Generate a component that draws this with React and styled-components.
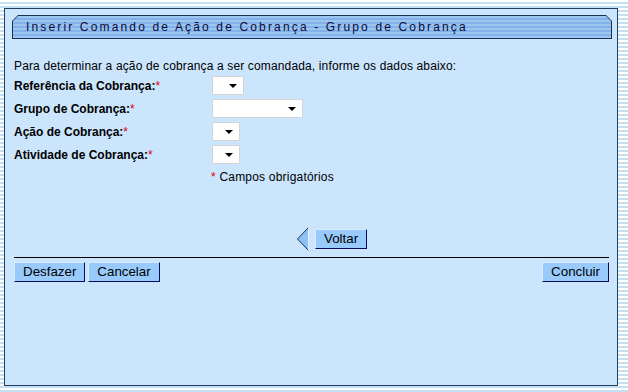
import React from "react";
import styled, { createGlobalStyle } from "styled-components";

const Global = createGlobalStyle`
  html, body { margin: 0; padding: 0; }
  body {
    width: 628px;
    height: 392px;
    overflow: hidden;
    font-family: "Liberation Sans", Arial, sans-serif;
    background: repeating-linear-gradient(to bottom, #ffffff 0 2px, #c4e0f5 2px 4px);
  }
  #root { padding: 8px 10px 0 4px; }
`;

const Panel = styled.div`
  box-sizing: border-box;
  width: 614px;
  height: 378px;
  background: #cbe5fd;
  border: 1px solid #24415f;
  padding: 6px 5px 0 7px;
  display: flex;
  flex-direction: column;
`;

const TitleFrame = styled.div`
  height: 24px;
  background: #1c3150;
  padding: 1px;
  box-sizing: border-box;
  clip-path: polygon(6px 0, calc(100% - 6px) 0, 100% 6px, 100% 100%, 0 100%, 0 6px);
`;

const TitleBar = styled.div`
  height: 100%;
  display: flex;
  align-items: center;
  padding-left: 13px;
  background: repeating-linear-gradient(to bottom, #9cc5f0 0 2px, #82b2e9 2px 4px);
  clip-path: polygon(5px 0, calc(100% - 5px) 0, 100% 5px, 100% 100%, 0 100%, 0 5px);
  color: #0a0a3a;
  font-size: 12px;
  letter-spacing: 2.15px;
`;

const Content = styled.div`
  padding: 0 3px 0 2px;
  display: flex;
  flex-direction: column;
  font-size: 12px;
  color: #000;
`;

const Intro = styled.div`
  margin-top: 20px;
  line-height: 15px;
  letter-spacing: 0.14px;
`;

const Form = styled.div`
  margin-top: 2px;
  display: grid;
  grid-template-columns: 198px auto;
  grid-auto-rows: 23px;
`;

const Label = styled.div`
  font-weight: bold;
  display: flex;
  align-items: center;
  height: 19px;
`;

const Req = styled.span`
  color: #e00000;
  font-weight: normal;
`;

const SelectCell = styled.div`
  display: flex;
  align-items: flex-start;
`;

const Select = styled.div`
  box-sizing: border-box;
  width: ${(p) => p.$w}px;
  height: 19px;
  background: #fff;
  border: 1px solid #d4d4d4;
  border-radius: 1px;
  display: flex;
  align-items: center;
  justify-content: flex-end;
  padding-right: 6px;
`;

const Caret = styled.span`
  width: 0;
  height: 0;
  border-left: 4px solid transparent;
  border-right: 4px solid transparent;
  border-top: 4px solid #000;
  margin-top: 1px;
`;

const Note = styled.div`
  margin-top: 2px;
  padding-left: 197px;
  line-height: 15px;
  letter-spacing: 0.2px;
`;

const BackRow = styled.div`
  margin-top: 42px;
  padding-left: 283px;
  display: flex;
  align-items: center;
  gap: 6px;
  height: 24px;
`;

const Button = styled.button`
  box-sizing: border-box;
  height: 20px;
  padding: 0 ${(p) => p.$px ?? 8}px;
  background: #98cafb;
  border: 1px solid;
  border-color: #d8ecff #0a0a5a #0a0a5a #d8ecff;
  font-family: "Liberation Sans", Arial, sans-serif;
  font-size: 13.33px;
  color: #000;
  line-height: 18px;
  cursor: pointer;
`;

const Rule = styled.div`
  margin-top: 6px;
  height: 1px;
  background: #000;
`;

const ActionRow = styled.div`
  margin-top: 4px;
  display: flex;
  gap: 3px;
`;

const Spacer = styled.div`
  flex: 1;
`;

function BackArrow() {
  return (
    <svg width="12" height="24" viewBox="0 0 12 24">
      <polygon points="11.5,0.5 0.5,12 11.5,23.5" fill="#8ec2f6" />
      <polyline points="11.5,0.5 0.5,12 11.5,23.5" fill="none" stroke="#1a2f55" strokeWidth="1" />
      <line x1="11.5" y1="0.5" x2="11.5" y2="23.5" stroke="#e6f3ff" strokeWidth="1" />
    </svg>
  );
}

const fields = [
  { label: "Referência da Cobrança:", w: 32 },
  { label: "Grupo de Cobrança:", w: 91 },
  { label: "Ação de Cobrança:", w: 28 },
  { label: "Atividade de Cobrança:", w: 28 },
];

export default function App() {
  return (
    <>
      <Global />
      <Panel>
        <TitleFrame>
          <TitleBar>Inserir Comando de Ação de Cobrança - Grupo de Cobrança</TitleBar>
        </TitleFrame>
        <Content>
          <Intro>Para determinar a ação de cobrança a ser comandada, informe os dados abaixo:</Intro>
          <Form>
            {fields.map((f) => (
              <React.Fragment key={f.label}>
                <Label>
                  {f.label}
                  <Req>*</Req>
                </Label>
                <SelectCell>
                  <Select $w={f.w}>
                    <Caret />
                  </Select>
                </SelectCell>
              </React.Fragment>
            ))}
          </Form>
          <Note>
            <Req>*</Req> Campos obrigatórios
          </Note>
          <BackRow>
            <BackArrow />
            <Button $px={8}>Voltar</Button>
          </BackRow>
          <Rule />
          <ActionRow>
            <Button>Desfazer</Button>
            <Button>Cancelar</Button>
            <Spacer />
            <Button>Concluir</Button>
          </ActionRow>
        </Content>
      </Panel>
    </>
  );
}
